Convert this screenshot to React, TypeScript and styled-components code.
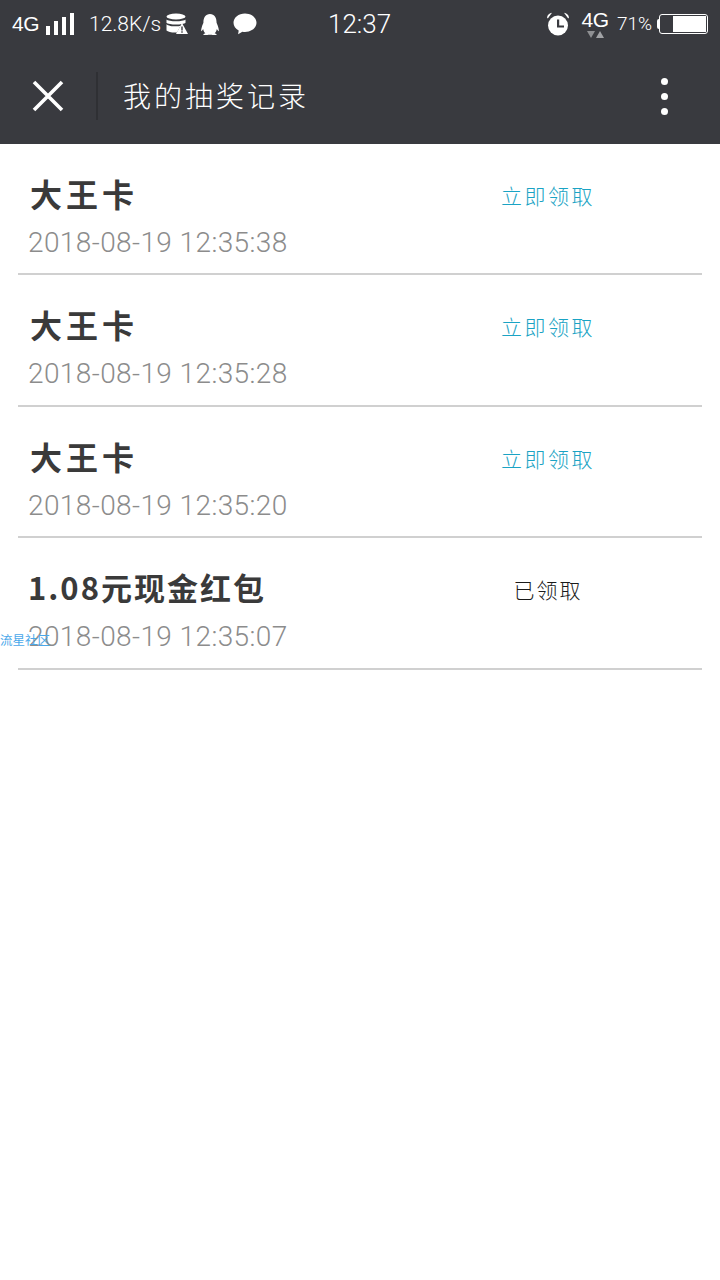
import React from 'react';
import styled, { createGlobalStyle } from 'styled-components';
import { FaQq } from 'react-icons/fa';

const GlobalStyle = createGlobalStyle`
  html, body {
    margin: 0;
    padding: 0;
    background: #ffffff;
  }
`;

const Page = styled.div`
  position: relative;
  width: 720px;
  height: 1280px;
  overflow: hidden;
  background: #ffffff;
  font-family: "Noto Sans CJK SC", "Noto Sans", sans-serif;
`;

const Header = styled.header`
  height: 144px;
  background: #393a3f;
  color: #ffffff;
`;

const StatusBar = styled.div`
  height: 48px;
  display: grid;
  grid-template-columns: 328px 61px 1fr;
  align-items: center;
`;

const StatusLeft = styled.div`
  display: flex;
  align-items: center;
  padding-left: 12px;
`;

const StatusRight = styled.div`
  display: flex;
  align-items: center;
  justify-content: flex-end;
  padding-right: 12px;
`;

const NetLabel = styled.span`
  font-family: "Liberation Sans", sans-serif;
  font-size: 21px;
  line-height: 20px;
  letter-spacing: -0.5px;
`;

const Signal = styled.div`
  display: flex;
  align-items: flex-end;
  gap: 4px;
  height: 22px;
  margin: 0 15px 0 7px;
`;

const SignalBar = styled.i<{ $h: number }>`
  display: block;
  width: 4px;
  height: ${({ $h }) => $h}px;
  background: #ffffff;
`;

const Speed = styled.span`
  font-family: Roboto, sans-serif;
  font-weight: 300;
  font-size: 21px;
  line-height: 24px;
  width: 77px;
  white-space: nowrap;
`;

const IconSlot = styled.span<{ $w: number; $mr: number }>`
  display: flex;
  align-items: center;
  justify-content: center;
  width: ${({ $w }) => $w}px;
  margin-right: ${({ $mr }) => $mr}px;
`;

const Clock = styled.span`
  font-family: Roboto, sans-serif;
  font-weight: 300;
  font-size: 26px;
  line-height: 30px;
  white-space: nowrap;
`;

const NetStack = styled.div`
  display: flex;
  flex-direction: column;
  align-items: center;
  width: 26px;
  margin: 0 9px 0 12px;
`;

const NetArrows = styled.div`
  display: flex;
  gap: 1px;
  height: 7px;
  margin-top: 1px;
`;

const ArrowDown = styled.i`
  width: 0;
  height: 0;
  border-left: 4px solid transparent;
  border-right: 4px solid transparent;
  border-top: 7px solid #8f9093;
`;

const ArrowUp = styled.i`
  width: 0;
  height: 0;
  border-left: 4px solid transparent;
  border-right: 4px solid transparent;
  border-bottom: 7px solid #a2a3a6;
`;

const BatteryText = styled.span`
  font-family: Roboto, sans-serif;
  font-weight: 300;
  font-size: 19px;
  line-height: 24px;
  width: 38px;
  margin-right: 2px;
  white-space: nowrap;
`;

const BatteryCap = styled.i`
  width: 2px;
  height: 10px;
  border-radius: 2px 0 0 2px;
  background: #ffffff;
`;

const Battery = styled.div`
  box-sizing: border-box;
  width: 49px;
  height: 20px;
  border: 1.5px solid #ffffff;
  border-radius: 3px;
  padding: 1px;
  display: flex;
  justify-content: flex-end;
`;

const BatteryFill = styled.i`
  display: block;
  width: 33px;
  background: #ffffff;
`;

const NavBar = styled.nav`
  height: 96px;
  display: flex;
  align-items: center;
`;

const CloseButton = styled.div`
  width: 96px;
  height: 48px;
  display: flex;
  align-items: center;
  justify-content: center;
`;

const NavDivider = styled.i`
  width: 2px;
  height: 48px;
  background: #2f3034;
`;

const NavTitle = styled.h1`
  flex: 1;
  margin: 0 0 3px 25px;
  font-size: 28px;
  font-weight: 300;
  line-height: 40px;
  letter-spacing: 3px;
  color: #ffffff;
`;

const MoreButton = styled.div`
  width: 112px;
  display: flex;
  flex-direction: column;
  align-items: center;
  gap: 8px;
`;

const MoreDot = styled.i`
  width: 7px;
  height: 7px;
  border-radius: 50%;
  background: #ffffff;
`;

const RecordList = styled.ul`
  list-style: none;
  margin: 0 18px;
  padding: 0;
`;

const RecordRow = styled.li<{ $h: number }>`
  box-sizing: border-box;
  height: ${({ $h }) => $h}px;
  padding: 26px 104px 0 10px;
  display: flex;
  justify-content: space-between;
  border-bottom: 2px solid #d0d0d0;
`;

const RecordInfo = styled.div`
  display: flex;
  flex-direction: column;
`;

const PrizeName = styled.div<{ $long?: boolean }>`
  font-size: ${({ $long }) => ($long ? '31px' : '32px')};
  font-weight: 700;
  line-height: 46px;
  margin-left: ${({ $long }) => ($long ? '0' : '2px')};
  letter-spacing: ${({ $long }) => ($long ? '2px' : '4px')};
  color: #3a3a3a;
  white-space: nowrap;
`;

const RecordTime = styled.div`
  font-family: Roboto, sans-serif;
  font-weight: 300;
  font-size: 28px;
  line-height: 34px;
  letter-spacing: 0.4px;
  margin-top: 10px;
  color: #8c8c8c;
  white-space: nowrap;
`;

const RecordAction = styled.div<{ $done?: boolean }>`
  width: 100px;
  text-align: center;
  font-size: 21px;
  line-height: 30px;
  margin-top: 10px;
  white-space: nowrap;
  font-weight: 300;
  letter-spacing: ${({ $done }) => ($done ? '2px' : '2.5px')};
  color: ${({ $done }) => ($done ? '#1a1a1a' : '#1aa3c4')};
`;

const Watermark = styled.span`
  position: absolute;
  left: 0;
  top: 631px;
  font-size: 12.5px;
  line-height: 18px;
  color: #4aa8ea;
  white-space: nowrap;
`;

const records = [
  { name: '大王卡', time: '2018-08-19 12:35:38', action: '立即领取', height: 131 },
  { name: '大王卡', time: '2018-08-19 12:35:28', action: '立即领取', height: 132 },
  { name: '大王卡', time: '2018-08-19 12:35:20', action: '立即领取', height: 131 },
  { name: '1.08元现金红包', time: '2018-08-19 12:35:07', action: '已领取', height: 132, done: true },
];

const DataIcon = () => (
  <svg width="22" height="22" viewBox="0 0 22 22">
    <ellipse cx="10" cy="3.5" rx="9.5" ry="3" fill="#fff" />
    <path d="M.5 6.5c2 2.4 17 2.4 19 0v3.2c-2 2.4-17 2.4-19 0z" fill="#fff" />
    <path d="M.5 11.2c2 2.4 12 2.6 14 1.6L11 19.4c-4 .5-9-.5-10.500-2z" fill="#fff" />
    <path d="M16 10l6 11H10z" fill="#fff" />
    <path d="M15.300 13.500h1.400v4h-1.400zM15.300 18.300h1.400v1.400h-1.400z" fill="#393a3f" />
  </svg>
);

const ChatIcon = () => (
  <svg width="24" height="22" viewBox="0 0 24 22">
    <path d="M12 .5C5.600.5.500 4.700.500 9.800c0 3.300 2 6 5.200 7.700l-.6 3.800 4.300-2.600c.9.200 1.700.2 2.600.2 6.400 0 11.500-4 11.500-9.100S18.400.5 12 .5z" fill="#fff" />
  </svg>
);

const AlarmIcon = () => (
  <svg width="24" height="24" viewBox="0 0 24 24">
    <circle cx="12" cy="13.500" r="10" fill="#fff" />
    <path d="M1 5.500C1.500 2.800 3.500 1 6 .8L1.800 6.500zM23 5.500C22.500 2.800 20.500 1 18 .8l4.200 5.700z" fill="#fff" />
    <path d="M11 7.500h2.200v6H18v2.100h-7z" fill="#393a3f" />
  </svg>
);

const CloseIcon = () => (
  <svg width="32" height="32" viewBox="0 0 32 32">
    <path d="M2 2l28 28M30 2L2 30" stroke="#fff" strokeWidth="3.600" fill="none" />
  </svg>
);

export default function App() {
  return (
    <Page>
      <GlobalStyle />
      <Header>
        <StatusBar>
          <StatusLeft>
            <NetLabel>4G</NetLabel>
            <Signal>
              <SignalBar $h={9} />
              <SignalBar $h={14} />
              <SignalBar $h={18} />
              <SignalBar $h={22} />
            </Signal>
            <Speed>12.8K/s</Speed>
            <IconSlot $w={22} $mr={12}><DataIcon /></IconSlot>
            <IconSlot $w={20} $mr={13}><FaQq size={21} color="#fff" /></IconSlot>
            <IconSlot $w={24} $mr={0}><ChatIcon /></IconSlot>
          </StatusLeft>
          <Clock>12:37</Clock>
          <StatusRight>
            <AlarmIcon />
            <NetStack>
              <NetLabel>4G</NetLabel>
              <NetArrows>
                <ArrowDown />
                <ArrowUp />
              </NetArrows>
            </NetStack>
            <BatteryText>71%</BatteryText>
            <BatteryCap />
            <Battery>
              <BatteryFill />
            </Battery>
          </StatusRight>
        </StatusBar>
        <NavBar>
          <CloseButton><CloseIcon /></CloseButton>
          <NavDivider />
          <NavTitle>我的抽奖记录</NavTitle>
          <MoreButton>
            <MoreDot />
            <MoreDot />
            <MoreDot />
          </MoreButton>
        </NavBar>
      </Header>
      <RecordList>
        {records.map((r) => (
          <RecordRow key={r.time} $h={r.height}>
            <RecordInfo>
              <PrizeName $long={r.done}>{r.name}</PrizeName>
              <RecordTime>{r.time}</RecordTime>
            </RecordInfo>
            <RecordAction $done={r.done}>{r.action}</RecordAction>
          </RecordRow>
        ))}
      </RecordList>
      <Watermark>流星社区</Watermark>
    </Page>
  );
}
